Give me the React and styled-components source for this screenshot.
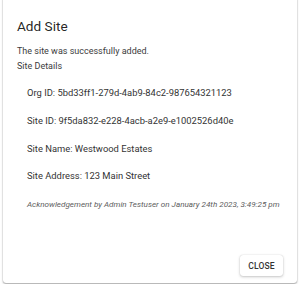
import React from 'react';
import styled, { createGlobalStyle } from 'styled-components';

const GlobalStyle = createGlobalStyle`
  html, body {
    margin: 0;
    padding: 0;
    background: #ffffff;
  }
  body {
    font-family: Roboto, "Liberation Sans", sans-serif;
    overflow: hidden;
  }
`;

const Page = styled.div`
  width: 300px;
  height: 288px;
  padding: 0 3px;
  box-sizing: border-box;
`;

const Paper = styled.div`
  margin-top: -4px;
  height: 287px;
  box-sizing: border-box;
  background: #ffffff;
  border-radius: 3px;
  box-shadow: 0 1px 2px rgba(0, 0, 0, 0.35), 0 0 1px rgba(0, 0, 0, 0.3);
  display: flex;
  flex-direction: column;
  padding: 19.6px 0 7px 0;
`;

const Title = styled.h2`
  margin: 0;
  padding: 0 14px;
  font-size: 13.6px;
  font-weight: 400;
  line-height: 20px;
  color: rgba(0, 0, 0, 0.87);
`;

const Text = styled.p`
  margin: ${(p) => (p.$first ? '8px' : '0')} 0 0 0;
  padding: 0 14px;
  font-size: 9px;
  line-height: 15px;
  color: #3c3c3c;
`;

const Details = styled.div`
  margin-top: 12.9px;
  padding: 0 24px;
  display: flex;
  flex-direction: column;
  gap: 13.6px;
`;

const Detail = styled.div`
  font-size: 9.4px;
  line-height: 14px;
  color: #333333;
  white-space: nowrap;
`;

const Ack = styled.div`
  font-size: 8.1px;
  line-height: 14px;
  font-style: italic;
  color: #5e5e5e;
  white-space: nowrap;
`;

const Actions = styled.div`
  margin-top: auto;
  display: flex;
  justify-content: flex-end;
  padding: 0 14px;
`;

const Button = styled.button`
  width: 43px;
  height: 21px;
  border: none;
  border-radius: 3px;
  background: #ffffff;
  box-shadow: 0 1px 3px rgba(0, 0, 0, 0.22), 0 0 1px rgba(0, 0, 0, 0.2);
  font-family: Roboto, "Liberation Sans", sans-serif;
  font-size: 8.5px;
  font-weight: 500;
  color: #333333;
  letter-spacing: 0.2px;
  padding: 0;
  cursor: pointer;
`;

const details = [
  'Org ID: 5bd33ff1-279d-4ab9-84c2-987654321123',
  'Site ID: 9f5da832-e228-4acb-a2e9-e1002526d40e',
  'Site Name: Westwood Estates',
  'Site Address: 123 Main Street',
];

export default function App() {
  return (
    <Page>
      <GlobalStyle />
      <Paper>
        <Title>Add Site</Title>
        <Text $first>The site was successfully added.</Text>
        <Text>Site Details</Text>
        <Details>
          {details.map((d) => (
            <Detail key={d}>{d}</Detail>
          ))}
          <Ack>Acknowledgement by Admin Testuser on January 24th 2023, 3:49:25 pm</Ack>
        </Details>
        <Actions>
          <Button>CLOSE</Button>
        </Actions>
      </Paper>
    </Page>
  );
}
